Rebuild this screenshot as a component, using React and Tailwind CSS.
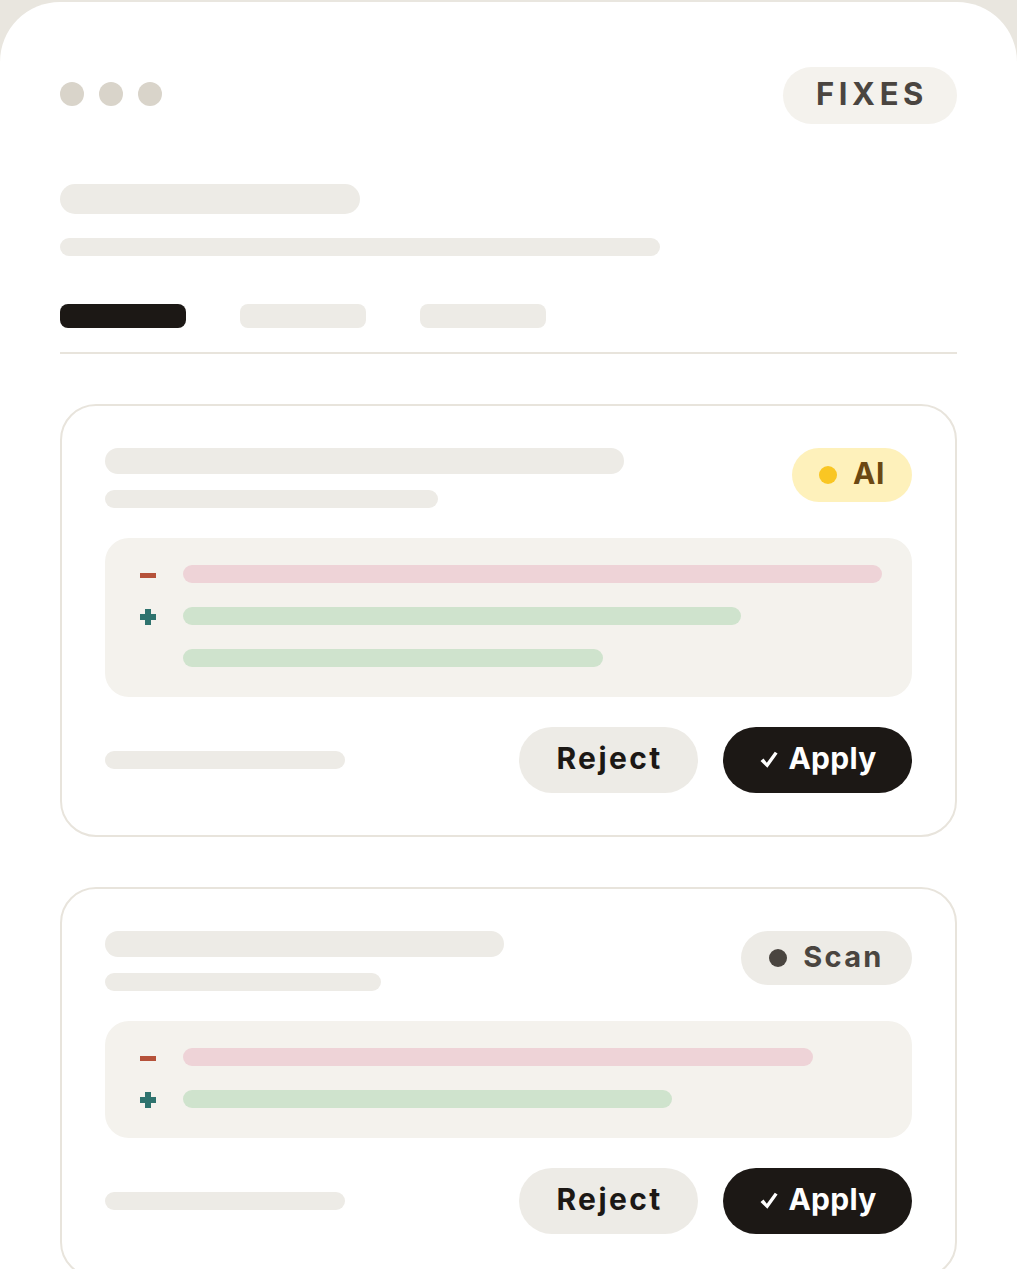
import React from "react";

const font = { fontFamily: "Inter, 'Noto Sans', sans-serif" };

function Check() {
  return (
    <svg width="18" height="18" viewBox="0 0 18 18" className="mr-[10px] mt-[3px]" fill="white">
      <path d="M0.5 10 L3.5 7.6 L6.8 11.8 L14.8 0.8 L17.6 2.4 L7.4 16.8 Z" />
    </svg>
  );
}

function Diff({ rows }) {
  return (
    <div className="mt-[30px] rounded-[24px] bg-[#f4f2ed] pl-[35px] pr-[30px] pt-[27px] pb-[30px] flex flex-col gap-[24px]">
      {rows.map((r, i) => (
        <div key={i} className="flex items-center h-[18px]">
          <div className="w-[43px] flex items-center pt-[2px]">
            {r.sign === "-" && <div className="w-[16px] h-[5px] bg-[#b5523a]" />}
            {r.sign === "+" && (
              <div className="relative w-[16px] h-[16px]">
                <div className="absolute left-0 top-[5px] w-[16px] h-[6px] bg-[#2e736e]" />
                <div className="absolute top-0 left-[5px] w-[6px] h-[16px] bg-[#2e736e]" />
              </div>
            )}
          </div>
          <div
            className={"h-[18px] rounded-full " + (r.type === "del" ? "bg-[#eed3d7]" : "bg-[#cfe3cd]")}
            style={{ width: r.w }}
          />
        </div>
      ))}
    </div>
  );
}

function Card({ titleW, subW, badge, rows }) {
  return (
    <div className="border-2 border-[#e8e4dc] rounded-[36px] px-[43px] pt-[42px] pb-[42px]">
      <div className="flex justify-between items-start">
        <div className="flex flex-col gap-[16px]">
          <div className="h-[26px] rounded-full bg-[#edebe6]" style={{ width: titleW }} />
          <div className="h-[18px] rounded-full bg-[#edebe6]" style={{ width: subW }} />
        </div>
        {badge}
      </div>
      <Diff rows={rows} />
      <div className="mt-[30px] flex items-center justify-between">
        <div className="w-[240px] h-[18px] rounded-full bg-[#edebe6]" />
        <div className="flex gap-[25px]">
          <button className="w-[179px] h-[66px] rounded-full bg-[#edebe6] text-[#1c1815] text-[30px] font-bold tracking-[0.08em] flex items-center justify-center pl-[2px] pb-[3px]">
            Reject
          </button>
          <button className="w-[189px] h-[66px] rounded-full bg-[#1c1815] text-white text-[30px] font-bold flex items-center justify-center tracking-[0.01em] pl-[2px] pb-[3px]">
            <Check />Apply
          </button>
        </div>
      </div>
    </div>
  );
}

export default function App() {
  return (
    <div className="h-[1269px] overflow-hidden bg-[#e9e6df] pt-[2px]" style={font}>
      <div className="bg-white rounded-t-[60px] min-h-[1400px] px-[60px] pt-[65px]">
        <div className="flex justify-between items-center">
          <div className="flex gap-[15px] mb-[3px]">
            <div className="w-[24px] h-[24px] rounded-full bg-[#d9d4ca]" />
            <div className="w-[24px] h-[24px] rounded-full bg-[#d9d4ca]" />
            <div className="w-[24px] h-[24px] rounded-full bg-[#d9d4ca]" />
          </div>
          <div className="w-[174px] h-[57px] rounded-full bg-[#f4f2ed] flex items-center justify-center text-[31px] font-bold tracking-[0.15em] text-[#4a4540] pl-[4px] pb-[2px]">
            FIXES
          </div>
        </div>
        <div className="mt-[60px] w-[300px] h-[30px] rounded-full bg-[#edebe6]" />
        <div className="mt-[24px] w-[600px] h-[18px] rounded-full bg-[#edebe6]" />
        <div className="mt-[48px] flex gap-[54px]">
          <div className="w-[126px] h-[24px] rounded-[8px] bg-[#1c1815]" />
          <div className="w-[126px] h-[24px] rounded-[8px] bg-[#edebe6]" />
          <div className="w-[126px] h-[24px] rounded-[8px] bg-[#edebe6]" />
        </div>
        <div className="mt-[24px] h-[2px] bg-[#e8e4dc]" />
        <div className="mt-[50px] flex flex-col gap-[50px]">
          <Card
            titleW={519}
            subW={333}
            badge={
              <div className="w-[120px] h-[54px] rounded-full bg-[#fef1bb] flex items-center justify-center gap-[16px]">
                <div className="w-[18px] h-[18px] rounded-full bg-[#f9c623]" />
                <span className="text-[30px] font-bold text-[#6b4812] tracking-[0.02em] mb-[3px]">AI</span>
              </div>
            }
            rows={[
              { sign: "-", type: "del", w: 699 },
              { sign: "+", type: "add", w: 558 },
              { sign: "", type: "add", w: 420 },
            ]}
          />
          <Card
            titleW={399}
            subW={276}
            badge={
              <div className="w-[171px] h-[54px] rounded-full bg-[#edebe6] flex items-center justify-center gap-[16px]">
                <div className="w-[18px] h-[18px] rounded-full bg-[#4a4540]" />
                <span className="text-[29px] font-bold text-[#4a4540] tracking-[0.08em] mb-[3px]">Scan</span>
              </div>
            }
            rows={[
              { sign: "-", type: "del", w: 630 },
              { sign: "+", type: "add", w: 489 },
            ]}
          />
        </div>
      </div>
    </div>
  );
}
